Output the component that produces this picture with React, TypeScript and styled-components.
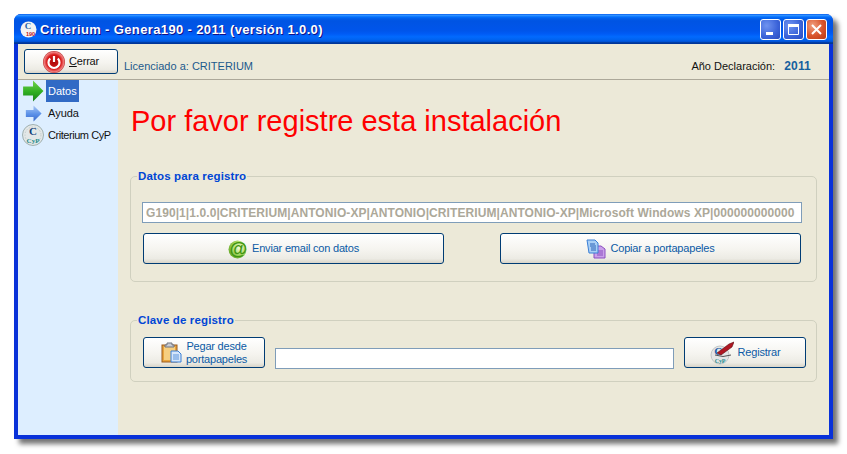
import styled, { createGlobalStyle } from "styled-components"

const GlobalStyle = createGlobalStyle`
  html, body {
    margin: 0;
    padding: 0;
    background: #fff;
  }
  body {
    font-family: 'Liberation Sans', Arial, sans-serif;
    font-size: 11px;
  }
`

const Page = styled.div`
  padding: 14px;
  width: 847px;
  height: 454px;
  box-sizing: border-box;
`
const Window = styled.div`
  width: 819px;
  height: 425px;
  display: flex;
  flex-direction: column;
  border-radius: 7px 7px 0 0;
  background: #0831d9;
  box-shadow: 5px 5px 5px rgba(0, 0, 0, 0.55);
`
const TitleBar = styled.div`
  height: 30px;
  flex: none;
  display: flex;
  align-items: center;
  padding: 0 6px;
  border-radius: 7px 7px 0 0;
  background: linear-gradient(180deg, #0058ee 0%, #3593ff 4%, #288eff 6%, #127dff 8%, #036ffc 10%, #0262ee 14%, #0057e5 20%, #0054e3 24%, #0055eb 56%, #005bf5 66%, #026afe 76%, #0062ef 86%, #0052d6 92%, #0040ab 94%, #003092 100%);
`
const TitleText = styled.span`
  margin-left: 3px;
  flex: 1;
  color: #fff;
  font-family: 'Liberation Sans', sans-serif;
  font-weight: 700;
  font-size: 13px;
  letter-spacing: 0.37px;
  text-shadow: 1px 1px 0 #0f1089;
`
const Caption = styled.div<{ $close?: boolean }>`
  width: 21px;
  height: 21px;
  margin-left: 2px;
  display: flex;
  align-items: center;
  justify-content: center;
  box-sizing: border-box;
  border: 1px solid #fff;
  border-radius: 3px;
  background: ${(p) =>
    p.$close
      ? "radial-gradient(circle at 30% 30%, #f0a080, #d8532b 55%, #b83a14)"
      : "radial-gradient(circle at 30% 30%, #6f93f0, #3a62d8 60%, #2a4cc0)"};
`
const Client = styled.div`
  flex: 1;
  margin: 0 4px 4px;
  min-height: 0;
  display: flex;
  flex-direction: column;
  background: #ece9d8;
`
const Toolbar = styled.div`
  height: 36px;
  flex: none;
  display: flex;
  align-items: center;
  padding: 0 18px 0 6px;
  box-sizing: border-box;
  border-bottom: 1px solid #aca899;
`
const Licence = styled.span`
  flex: 1;
  margin: 8px 0 0 6px;
  color: #1c5a8c;
`
const YearLabel = styled.span`
  margin-top: 8px;
  color: #111;
`
const YearValue = styled.span`
  margin: 8px 0 0 9px;
  color: #15609f;
  font-weight: 700;
  font-size: 12px;
  letter-spacing: 0.2px;
`
const Main = styled.div`
  flex: 1;
  min-height: 0;
  display: flex;
`
const Sidebar = styled.ul`
  width: 100px;
  flex: none;
  margin: 0;
  padding: 0;
  list-style: none;
  background: #ddeeff;
`
const SideItem = styled.li`
  height: 22px;
  display: flex;
  align-items: center;
  padding-left: 2px;
`
const SideIcon = styled.span`
  width: 26px;
  flex: none;
  display: flex;
  justify-content: center;
`
const SideLabel = styled.span<{ $active?: boolean; $tight?: boolean }>`
  height: 22px;
  line-height: 22px;
  padding: 0 2px;
  white-space: nowrap;
  letter-spacing: ${(p) => (p.$tight ? "-0.45px" : "0")};
  color: ${(p) => (p.$active ? "#fff" : "#111")};
  background: ${(p) => (p.$active ? "#316ac5" : "transparent")};
`
const Content = styled.div`
  flex: 1;
  min-width: 0;
  padding: 0 12px;
`
const Heading = styled.h1`
  margin: 23px 0 0 1px;
  height: 36px;
  color: #ff0000;
  font-family: 'Liberation Sans', Arial, sans-serif;
  font-weight: 400;
  font-size: 29px;
  line-height: 36px;
  white-space: nowrap;
`
const Group = styled.fieldset<{ $gap: number; $height: number }>`
  margin: ${(p) => p.$gap}px 0 0;
  padding: 0 14px 0 11px;
  height: ${(p) => p.$height}px;
  box-sizing: border-box;
  min-width: 0;
  border: 1px solid #d0d0bf;
  border-radius: 5px;
`
const GroupTitle = styled.legend`
  padding: 0 1px;
  margin-left: -5px;
  color: #0046d5;
  font-family: 'Liberation Sans', sans-serif;
  font-weight: 700;
  font-size: 11.5px;
  line-height: 14px;
  letter-spacing: 0.15px;
`
const Field = styled.input`
  display: block;
  box-sizing: border-box;
  height: 21px;
  width: 100%;
  padding: 0 3px;
  border: 1px solid #7f9db9;
  background: #fff;
  outline: none;
`
const DataField = styled(Field)`
  margin-top: 19px;
  color: #aca899;
  font-family: 'Liberation Sans', sans-serif;
  font-weight: 700;
  font-size: 12px;
  letter-spacing: 0.08px;
`
const KeyField = styled(Field)`
  flex: 1;
  min-width: 0;
  margin: 11px 10px 0;
`
const ButtonRow = styled.div`
  margin-top: 10px;
  padding: 0 1px;
  display: flex;
  justify-content: space-between;
`
const KeyRow = styled.div`
  margin: 10px -4px 0 0;
  padding-left: 1px;
  display: flex;
  align-items: flex-start;
`
const Button = styled.button<{ $width: number; $height?: number; $dark?: boolean }>`
  width: ${(p) => p.$width}px;
  height: ${(p) => p.$height ?? 31}px;
  flex: none;
  padding: 0;
  display: flex;
  align-items: center;
  justify-content: center;
  gap: 4px;
  border: 1px solid #003c74;
  border-radius: 3px;
  color: ${(p) => (p.$dark ? "#111" : "#0b5aa5")};
  font: inherit;
  line-height: 13px;
  letter-spacing: -0.2px;
  background: linear-gradient(180deg, #fff 0%, #f5f4ef 55%, #ecebe4 85%, #d8d4c8 100%);
`
const PasteText = styled.span`
  text-align: center;
`

const PowerIcon = () => (
  <svg width="22" height="22" viewBox="0 0 22 22">
    <defs>
      <radialGradient id="powerBall" cx="50%" cy="50%" r="50%">
        <stop offset="0%" stopColor="#a80808" />
        <stop offset="65%" stopColor="#d81818" />
        <stop offset="90%" stopColor="#f08080" />
        <stop offset="100%" stopColor="#b83030" />
      </radialGradient>
    </defs>
    <circle cx="11" cy="11" r="11" fill="url(#powerBall)" />
    <path d="M7.2 7.5a5.5 5.5 0 1 0 7.6 0" fill="none" stroke="#fff" strokeWidth="2.2" />
    <path d="M11 5v6" stroke="#fff" strokeWidth="2.2" />
  </svg>
)
const Arrow = ({ id, size, light, mid, dark }: { id: string; size: number; light: string; mid: string; dark: string }) => (
  <svg width={size} height={size} viewBox="0 0 20 20">
    <defs>
      <linearGradient id={id} x1="0" y1="0" x2="0" y2="1">
        <stop offset="0%" stopColor={light} />
        <stop offset="55%" stopColor={mid} />
        <stop offset="100%" stopColor={dark} />
      </linearGradient>
    </defs>
    <path d="M1 6h9V0.5L19.5 10 10 19.5V14H1z" fill={`url(#${id})`} />
  </svg>
)
const LogoIcon = ({ size }: { size: number }) => (
  <svg width={size} height={size} viewBox="0 0 22 22">
    <circle cx="11" cy="11" r="10.5" fill="#e3e7e7" stroke="#9fb0b0" />
    <circle cx="11" cy="11" r="8" fill="none" stroke="#c2cccc" strokeDasharray="1.5 1.5" />
    <text x="11" y="10.5" textAnchor="middle" fontFamily="Liberation Serif" fontWeight="700" fontSize="11" fill="#123f7a">C</text>
    <text x="11" y="18.5" textAnchor="middle" fontFamily="Liberation Serif" fontWeight="700" fontSize="7" fill="#1d8a8a">CyP</text>
  </svg>
)
const TitleLogo = () => (
  <svg width="17" height="17" viewBox="0 0 17 17">
    <circle cx="8.5" cy="8.5" r="8" fill="#f2f2f2" />
    <text x="8" y="8" textAnchor="middle" fontFamily="Liberation Serif" fontWeight="700" fontSize="9" fill="#1a5fa8">C</text>
    <text x="10.5" y="15" textAnchor="middle" fontFamily="Liberation Sans" fontWeight="700" fontSize="5.5" fill="#c01818">190</text>
  </svg>
)
const AtIcon = () => (
  <svg width="20" height="20" viewBox="0 0 20 20">
    <defs>
      <radialGradient id="atBall" cx="60%" cy="40%" r="60%">
        <stop offset="0%" stopColor="#f4fbe6" />
        <stop offset="55%" stopColor="#b4e070" />
        <stop offset="100%" stopColor="#6cae2c" />
      </radialGradient>
    </defs>
    <circle cx="9.5" cy="10.5" r="9" fill="url(#atBall)" />
    <text x="10" y="15.5" textAnchor="middle" fontFamily="Liberation Sans" fontWeight="700" fontStyle="italic" fontSize="18" fill="#3f9412">@</text>
  </svg>
)
const CopyIcon = () => (
  <svg width="20" height="20" viewBox="0 0 20 20">
    <path d="M8 7h7l4 3v9H8z" fill="#c9a0ea" stroke="#8a4fc0" />
    <path d="M11 12h6M11 14h6M11 16h6" stroke="#8a4fc0" />
    <path d="M1 1h8l3 3v10H3z" fill="#a9cff5" stroke="#3a7fd5" />
    <path d="M4 5h5M4 7h6M5 9h5M5 11h5" stroke="#2a62b8" />
  </svg>
)
const PasteIcon = () => (
  <svg width="21" height="21" viewBox="0 0 21 21">
    <rect x="1" y="3" width="15" height="17" fill="#e9a43c" stroke="#9a5a1c" />
    <rect x="3" y="5" width="11" height="13" fill="#f6cf80" />
    <path d="M6 3V1h5v2h2v2H4V3z" fill="#c9ccd4" stroke="#6f7480" />
    <path d="M10 9h7l3 3v8H10z" fill="#d5e6fa" stroke="#3a7fd5" />
    <path d="M12 13h6M12 15h6M12 17h6" stroke="#5c95dc" />
  </svg>
)
const SignIcon = () => (
  <svg width="24" height="24" viewBox="0 0 24 24">
    <circle cx="10" cy="14" r="9" fill="#e4e6e6" stroke="#c0c6c6" />
    <text x="8" y="14" textAnchor="middle" fontFamily="Liberation Serif" fontWeight="700" fontSize="11" fill="#1a5fa8">C</text>
    <text x="10" y="22" textAnchor="middle" fontFamily="Liberation Serif" fontWeight="700" fontSize="6" fill="#1d8a8a">CyP</text>
    <path d="M7 12 L19 3 L24 1 L22 6 L11 14z" fill="#b01822" stroke="#5c0a10" strokeWidth="0.6" />
    <path d="M5 14q8 3 16 0" fill="none" stroke="#555" />
  </svg>
)

export default function App() {
  return (
    <Page>
      <GlobalStyle />
      <Window>
        <TitleBar>
          <TitleLogo />
          <TitleText>Criterium - Genera190 - 2011 (versión 1.0.0)</TitleText>
          <Caption>
            <svg width="13" height="13" viewBox="0 0 13 13"><rect x="2" y="9" width="7" height="3" fill="#fff" /></svg>
          </Caption>
          <Caption>
            <svg width="13" height="13" viewBox="0 0 13 13"><path d="M1.5 3.5h10v8h-10z" fill="none" stroke="#fff" /><rect x="1" y="1" width="11" height="3" fill="#fff" /></svg>
          </Caption>
          <Caption $close>
            <svg width="13" height="13" viewBox="0 0 13 13"><path d="M2 2l9 9M11 2l-9 9" stroke="#fff" strokeWidth="2" /></svg>
          </Caption>
        </TitleBar>
        <Client>
          <Toolbar>
            <Button $width={94} $height={25} $dark>
              <PowerIcon />
              <span><u>C</u>errar</span>
            </Button>
            <Licence>Licenciado a: CRITERIUM</Licence>
            <YearLabel>Año Declaración:</YearLabel>
            <YearValue>2011</YearValue>
          </Toolbar>
          <Main>
            <Sidebar>
              <SideItem>
                <SideIcon><Arrow id="arrowGreen" size={22} light="#6fd24a" mid="#2fae22" dark="#17801a" /></SideIcon>
                <SideLabel $active>Datos</SideLabel>
              </SideItem>
              <SideItem>
                <SideIcon><Arrow id="arrowBlue" size={17} light="#a9c8f5" mid="#5a90e8" dark="#3a68c8" /></SideIcon>
                <SideLabel>Ayuda</SideLabel>
              </SideItem>
              <SideItem>
                <SideIcon><LogoIcon size={22} /></SideIcon>
                <SideLabel $tight>Criterium CyP</SideLabel>
              </SideItem>
            </Sidebar>
            <Content>
              <Heading>Por favor registre esta instalación</Heading>
              <Group $gap={30} $height={113}>
                <GroupTitle>Datos para registro</GroupTitle>
                <DataField readOnly value="G190|1|1.0.0|CRITERIUM|ANTONIO-XP|ANTONIO|CRITERIUM|ANTONIO-XP|Microsoft Windows XP|000000000000" />
                <ButtonRow>
                  <Button $width={301}><AtIcon />Enviar email con datos</Button>
                  <Button $width={301}><CopyIcon />Copiar a portapapeles</Button>
                </ButtonRow>
              </Group>
              <Group $gap={31} $height={69}>
                <GroupTitle>Clave de registro</GroupTitle>
                <KeyRow>
                  <Button $width={122}>
                    <PasteIcon />
                    <PasteText>Pegar desde<br />portapapeles</PasteText>
                  </Button>
                  <KeyField readOnly value="" />
                  <Button $width={122}><SignIcon />Registrar</Button>
                </KeyRow>
              </Group>
            </Content>
          </Main>
        </Client>
      </Window>
    </Page>
  )
}
